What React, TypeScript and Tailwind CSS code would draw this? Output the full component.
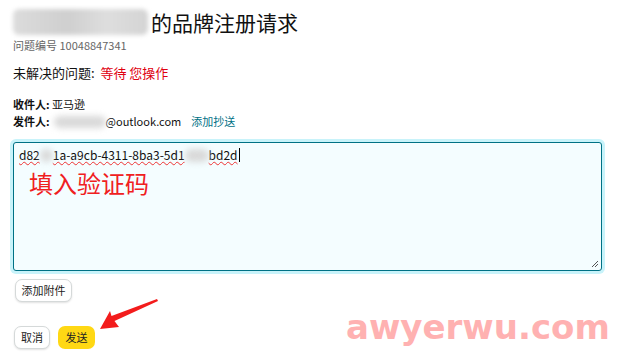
import React from "react";

const cjk = "font-['Noto_Sans_CJK_SC','Noto_Sans',sans-serif]";

function Smudge({ className }: { className: string }) {
  return <span className={`inline-block rounded-full bg-[#d9d9d9] blur-[3px] ${className}`} />;
}

export default function App() {
  return (
    <div className={`relative h-[359px] w-[623px] overflow-hidden bg-white text-[#111] ${cjk}`}>
      <div className="flex flex-col px-[13px] pt-[7px]">
        <div className="flex items-center">
          <div className="h-[26px] w-[135px] rounded-md bg-[linear-gradient(90deg,#dcdcdc,#cfcfcf_40%,#dedede_70%,#d4d4d4)] blur-[2px]" />
          <h1 className="ml-[3px] text-[21px] leading-[30px] font-normal text-[#111]">的品牌注册请求</h1>
        </div>
        <p className="mt-[1px] text-[11px] leading-[14px] text-[#666]">问题编号 10048847341</p>
        <p className="mt-[12px] text-[13px] leading-[18px]">
          未解决的问题:&nbsp; <span className="text-[#e0000f]">等待 您操作</span>
        </p>

        <div className="mt-[14px] flex flex-col text-[11px] leading-[17px]">
          <p><span className="font-bold">收件人:</span> 亚马逊</p>
          <p className="flex items-center">
            <span className="font-bold">发件人:</span>
            <Smudge className="ml-[4px] h-[12px] w-[52px]" />
            <span>@outlook.com</span>
            <span className="ml-[10px] text-[#007185]">添加抄送</span>
          </p>
        </div>

        <div className="relative mt-[12px] h-[129px] w-[589px] rounded-[3px] border border-[#007185] bg-[#f4fdff] shadow-[0_0_0_3px_#c8f3fa]">
          <div className="flex items-center px-[5px] pt-[4px] text-[12px] leading-[16px] text-[#111]">
            <span className="underline decoration-wavy decoration-[#e33] decoration-[1px]">d82</span>
            <Smudge className="h-[13px] w-[13px]" />
            <span className="underline decoration-wavy decoration-[#e33] decoration-[1px]">1a-a9cb-4311-8ba3-5d1</span>
            <Smudge className="h-[13px] w-[24px]" />
            <span className="underline decoration-wavy decoration-[#e33] decoration-[1px]">bd2d</span>
            <span className="ml-[1px] inline-block h-[14px] w-px bg-black" />
          </div>
          <p className="ml-[15px] mt-[5px] text-[24px] leading-[30px] text-[#f0201e]">填入验证码</p>
          <svg className="absolute bottom-[2px] right-[2px]" width="8" height="8" viewBox="0 0 8 8">
            <path d="M1 7 L7 1 M4 7 L7 4" stroke="#555" strokeWidth="1" />
          </svg>
        </div>

        <div className="mt-[8px] flex">
          <button className="ml-[2px] h-[23px] w-[57px] rounded-[7px] border border-[#d5d9d9] bg-white text-[11px] text-[#222] shadow-[0_1px_2px_rgba(0,0,0,0.12)]">添加附件</button>
        </div>

        <div className="mt-[24px] flex gap-[8px]">
          <button className="ml-[1px] h-[23px] w-[36px] rounded-[7px] border border-[#d5d9d9] bg-white text-[11px] text-[#222] shadow-[0_1px_2px_rgba(0,0,0,0.12)]">取消</button>
          <button className="h-[23px] w-[37px] rounded-[7px] bg-[#ffd814] text-[11px] text-[#222]">发送</button>
        </div>
      </div>

      <svg className="absolute left-0 top-0" width="623" height="359" viewBox="0 0 623 359">
        <polygon points="100,329 110,311 111.5,316 157,299 158,301 114.5,321 119,327" fill="#f31c1c" />
      </svg>

      <div className="absolute left-[346px] top-[307px] font-['DejaVu_Sans',sans-serif] text-[34px] font-bold leading-[40px] text-[#ffb1b1]">
        awyerwu.com
      </div>
    </div>
  );
}
